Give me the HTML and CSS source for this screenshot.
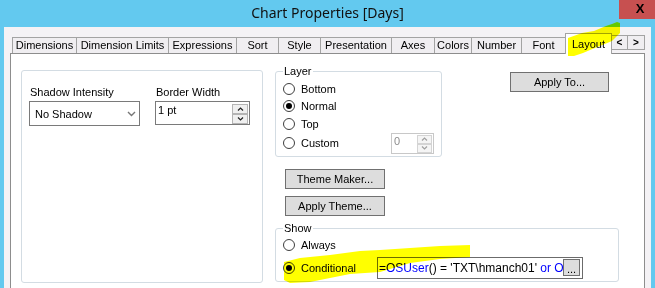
FILE: index.html
```html
<!DOCTYPE html>
<html lang="en">
<head>
    <meta charset="UTF-8">
    <title>Chart Properties [Days]</title>
    <link rel="stylesheet" href="styles.css">
</head>
<body>
<div class="titlebar">
    <span></span>
    <h1 class="title">Chart Properties [Days]</h1>
    <div class="close">X</div>
</div>
<div class="window">
    <div class="tabs">
        <div class="tab">Dimensions</div>
        <div class="tab">Dimension Limits</div>
        <div class="tab">Expressions</div>
        <div class="tab">Sort</div>
        <div class="tab">Style</div>
        <div class="tab">Presentation</div>
        <div class="tab">Axes</div>
        <div class="tab">Colors</div>
        <div class="tab">Number</div>
        <div class="tab">Font</div>
        <div class="tab active">Layout</div>
        <div class="scroll">&lt;</div>
        <div class="scroll">&gt;</div>
    </div>
    <div class="panel">
        <div class="group left-group">
            <div class="field">
                <label>Shadow Intensity</label>
                <div class="select">No Shadow
                    <svg width="9" height="6" viewBox="0 0 9 6"><polyline points="1,1 4.5,4.5 8,1" fill="none" stroke="#777" stroke-width="1.4"/></svg>
                </div>
            </div>
            <div class="field">
                <label>Border Width</label>
                <div class="input">
                    <span>1 pt</span>
                    <div class="spin">
                        <div class="spin-btn"><svg width="7" height="4" viewBox="0 0 7 4"><polyline points="1,3.5 3.5,1 6,3.5" fill="none" stroke="#222" stroke-width="1.2"/></svg></div>
                        <div class="spin-btn"><svg width="7" height="4" viewBox="0 0 7 4"><polyline points="1,0.5 3.5,3 6,0.5" fill="none" stroke="#222" stroke-width="1.2"/></svg></div>
                    </div>
                </div>
            </div>
        </div>
        <div class="right-area">
            <div class="top-row">
                <fieldset class="group layer">
                    <legend>Layer</legend>
                    <div class="radio-row"><span class="radio"></span>Bottom</div>
                    <div class="radio-row"><span class="radio checked"></span>Normal</div>
                    <div class="radio-row"><span class="radio"></span>Top</div>
                    <div class="radio-row custom-row"><span class="radio"></span>Custom
                        <div class="input small disabled">
                            <span>0</span>
                            <div class="spin">
                                <div class="spin-btn"><svg width="7" height="4" viewBox="0 0 7 4"><polyline points="1,3.5 3.5,1 6,3.5" fill="none" stroke="#a0a0a0" stroke-width="1.2"/></svg></div>
                                <div class="spin-btn"><svg width="7" height="4" viewBox="0 0 7 4"><polyline points="1,0.5 3.5,3 6,0.5" fill="none" stroke="#a0a0a0" stroke-width="1.2"/></svg></div>
                            </div>
                        </div>
                    </div>
                </fieldset>
                <button class="btn apply-to">Apply To...</button>
            </div>
            <button class="btn theme maker">Theme Maker...</button>
            <button class="btn theme">Apply Theme...</button>
            <fieldset class="group show">
                <legend>Show</legend>
                <div class="radio-row"><span class="radio"></span>Always</div>
                <div class="radio-row cond-row">
                    <div class="cond-label"><span class="radio checked"></span>Conditional</div>
                    <div class="expr">=<span class="kw">OSUser</span>() = 'TXT\hmanch01' <span class="kw">or OSU</span>
                        <button class="btn dots">...</button>
                    </div>
                </div>
            </fieldset>
        </div>
    </div>
</div>
<svg class="marker" width="655" height="288" viewBox="0 0 655 288">
    <polygon points="568,38 582,33 594,31 606,26 612,24 617,22 620,23 620,33 612,41 600,46 590,50 583,53 574,56 568,56" fill="#ffff00"/>
    <polygon points="284,262 300,258 330,255 360,251 380,250 410,248 440,246 470,245 470,257 440,259 410,263 380,272 350,274 330,278 310,282 290,283 284,280" fill="#ffff00"/>
</svg>
</body>
</html>
```

FILE: styles.css
```css
*{
    margin: 0;
    padding: 0;
    box-sizing: border-box;
}
body{
    width: 655px;
    height: 288px;
    overflow: hidden;
    position: relative;
    background-color: #63c9ef;
    font-family: "Liberation Sans", Arial, sans-serif;
    font-size: 11px;
    color: #000;
}
.titlebar{
    height: 27px;
    display: grid;
    grid-template-columns: 1fr auto 1fr;
}
.title{
    font-family: "Noto Sans", sans-serif;
    font-weight: normal;
    font-size: 14px;
    line-height: 26px;
    color: #111;
}
.close{
    justify-self: end;
    width: 36px;
    height: 19px;
    background-color: #c75050;
    font-weight: bold;
    font-size: 13px;
    line-height: 18px;
    text-align: center;
    padding-left: 6px;
}
.window{
    height: 261px;
    margin: 0 4px;
    padding: 6px 6px 0;
    background-color: #f4f2f5;
    display: flex;
    flex-direction: column;
}
.tabs{
    height: 20px;
    padding-left: 2px;
    display: grid;
    grid-template-columns: 64px 92px 68px 42px 42px 71px 43px 37px 50px 44px 46px 16px 17px;
    align-items: end;
}
.tab{
    height: 16px;
    margin-right: -1px;
    border: 1px solid #a3a3a3;
    border-bottom: none;
    background-color: #f0eef1;
    text-align: center;
    line-height: 15px;
    white-space: nowrap;
}
.tab.active{
    height: 21px;
    margin-bottom: -1px;
    position: relative;
    z-index: 1;
    background-color: #fff;
    line-height: 20px;
}
.scroll{
    align-self: start;
    height: 15px;
    margin-top: 2px;
    margin-right: -1px;
    border: 1px solid #a3a3a3;
    background-color: #f0eef1;
    font-weight: bold;
    font-size: 10px;
    line-height: 13px;
    text-align: center;
}
.panel{
    flex: 1;
    display: flex;
    align-items: flex-start;
    background-color: #fff;
    border: 1px solid #8d8d8d;
    border-bottom: none;
}
.group{
    border: 1px solid #d3dce3;
    border-radius: 3px;
}
.left-group{
    width: 242px;
    height: 213px;
    margin: 16px 0 0 10px;
    padding: 15px 0 0 7px;
    display: flex;
    gap: 15px;
}
.field label{
    display: block;
    padding-left: 1px;
    line-height: 13px;
    margin-bottom: 2px;
}
.select{
    width: 111px;
    height: 25px;
    border: 1px solid #7a7a7a;
    padding: 0 3px 0 5px;
    display: flex;
    align-items: center;
    justify-content: space-between;
}
.input{
    width: 95px;
    height: 24px;
    border: 1px solid #7a7a7a;
    padding: 2px 0 0 2px;
    display: flex;
    justify-content: space-between;
    line-height: 13px;
}
.spin{
    width: 16px;
    margin-right: 1px;
}
.spin-btn{
    height: 10px;
    border: 1px solid #b4b4b4;
    background-color: #f0f0f0;
    display: flex;
    align-items: center;
    justify-content: center;
}
.right-area{
    margin-left: 12px;
    display: flex;
    flex-direction: column;
    align-items: flex-start;
}
.top-row{
    margin-top: 11px;
    display: flex;
    align-items: flex-start;
}
fieldset.group{
    padding: 2px 7px;
}
legend{
    padding: 0 1px;
    line-height: 13px;
}
.layer{
    width: 167px;
}
.radio-row{
    height: 17.5px;
    display: flex;
    align-items: center;
}
.radio{
    width: 12px;
    height: 12px;
    margin-right: 6px;
    border: 1px solid #3e3e3e;
    border-radius: 50%;
    background-color: #fff;
    display: flex;
    align-items: center;
    justify-content: center;
}
.radio.checked::after{
    content: "";
    width: 6px;
    height: 6px;
    border-radius: 50%;
    background-color: #000;
}
.custom-row{
    height: 21px;
}
.input.small{
    width: 43px;
    height: 21px;
    margin-left: auto;
    padding-top: 1px;
}
.input.disabled{
    border-color: #c8c8c8;
    color: #8c8c8c;
}
.input.small .spin{
    width: 15px;
}
.input.disabled .spin-btn{
    height: 9px;
    border-color: #d4d4d4;
    background-color: #f5f5f5;
}
.btn{
    height: 20px;
    border: 1px solid #707070;
    background-color: #dddddd;
    font-family: "Liberation Sans", Arial, sans-serif;
    font-size: 11px;
    color: #000;
}
.apply-to{
    width: 99px;
    margin: 7px 0 0 68px;
}
.theme{
    width: 100px;
    margin: 7px 0 0 10px;
}
.theme.maker{
    margin-top: 12px;
}
.show{
    width: 344px;
    margin-top: 6px;
}
.cond-row{
    height: 22px;
    margin-top: 3px;
}
.cond-label{
    width: 94px;
    display: flex;
    align-items: center;
}
.expr{
    width: 206px;
    height: 22px;
    position: relative;
    overflow: hidden;
    white-space: nowrap;
    border: 1px solid #6b6b6b;
    padding-left: 1px;
    font-size: 12px;
    line-height: 20px;
}
.kw{
    color: #0000ff;
}
.btn.dots{
    position: absolute;
    top: 1px;
    right: 2px;
    width: 17px;
    height: 17px;
    line-height: 18px;
}
.marker{
    position: absolute;
    top: 0;
    left: 0;
    z-index: 2;
    mix-blend-mode: multiply;
    pointer-events: none;
}
```
